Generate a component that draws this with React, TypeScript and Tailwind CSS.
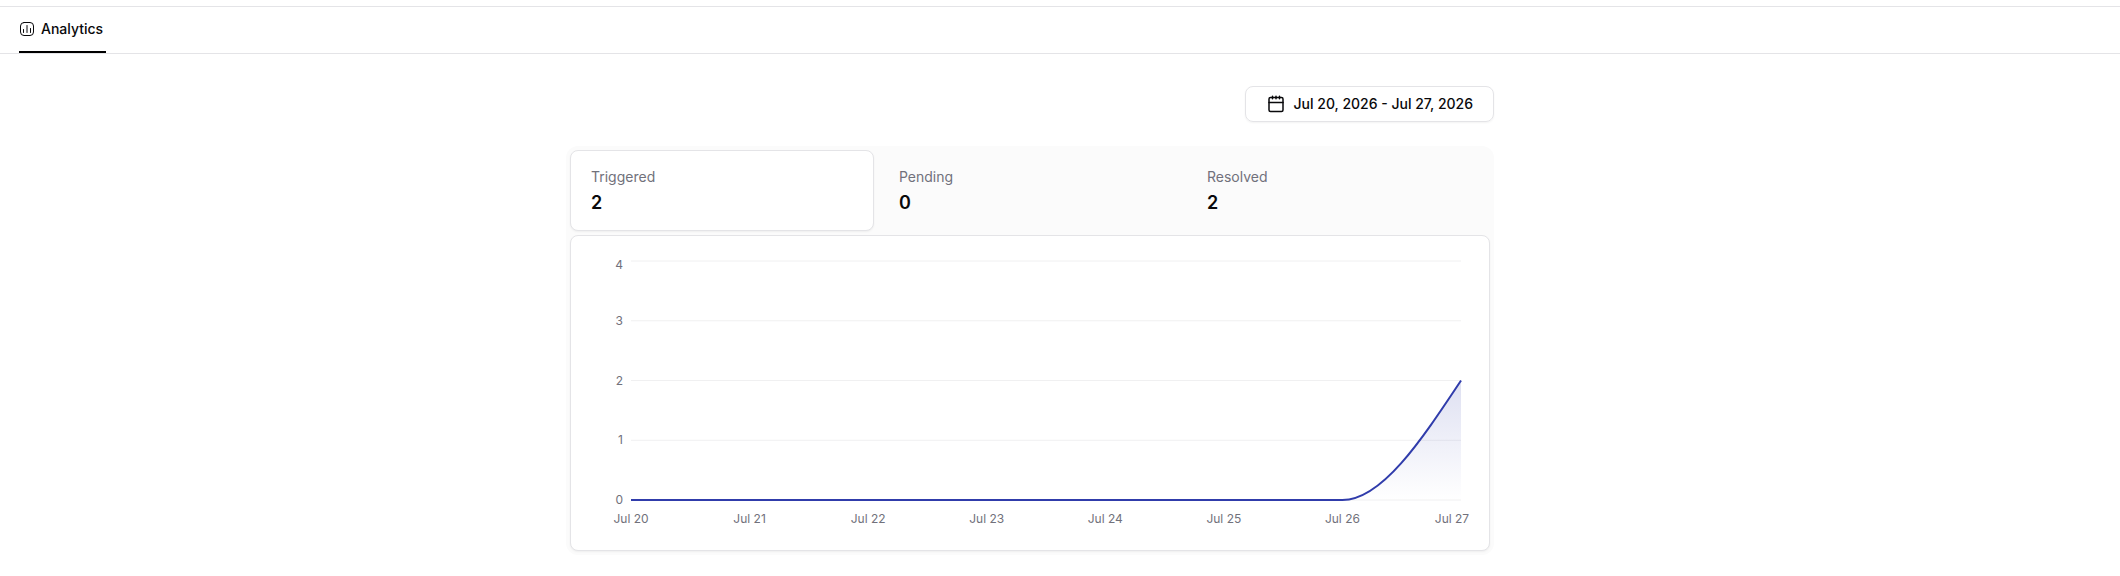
import { useId } from 'react'

const stats = [
  { label: 'Triggered', value: 2 },
  { label: 'Pending', value: 0 },
  { label: 'Resolved', value: 2 },
]

const yTicks = [4, 3, 2, 1, 0]
const days = ['Jul 20', 'Jul 21', 'Jul 22', 'Jul 23', 'Jul 24', 'Jul 25', 'Jul 26', 'Jul 27']

const plot = { left: 60, right: 890, top: 25, bottom: 264 }
const step = (plot.right - plot.left) / (days.length - 1)

function ChartIcon() {
  return (
    <svg viewBox="0 0 16 16" className="size-4" fill="none" stroke="currentColor" strokeLinecap="round">
      <rect x="1.5" y="1.5" width="13" height="13" rx="3.5" />
      <path d="M4.5 8.5v3M8 4.5v7M11.5 7.5v4" />
    </svg>
  )
}

function CalendarIcon() {
  return (
    <svg viewBox="0 0 20 20" className="size-5" fill="none" stroke="currentColor" strokeWidth="1.5" strokeLinecap="round" strokeLinejoin="round">
      <rect x="3" y="3.5" width="14" height="14" rx="1.5" />
      <path d="M3 8.5h14M6.5 2.25v2.5M10 2.25v2.5M13.5 2.25v2.5" />
    </svg>
  )
}

function AreaChart() {
  const id = useId()
  const x26 = plot.right - step
  const curve = `M${plot.left} ${plot.bottom}H${x26}C${x26 + step / 3} ${plot.bottom} ${plot.right - step / 3} ${plot.bottom - 60} ${plot.right} 144.5`

  return (
    <svg viewBox="0 0 918 314" className="block w-full" role="img" aria-label="Alerts per day">
      <defs>
        <linearGradient id={id} x1="0" y1="0" x2="0" y2="1">
          <stop offset="0" stopColor="#303cab" stopOpacity="0.16" />
          <stop offset="1" stopColor="#303cab" stopOpacity="0" />
        </linearGradient>
      </defs>
      {yTicks.map((t) => {
        const y = plot.bottom - (t * (plot.bottom - plot.top)) / 4
        return (
          <g key={t}>
            <path d={`M${plot.left} ${y}H${plot.right}`} stroke="#f0f0f1" />
            <text x="52" y={t === 4 ? 33 : y + 4} textAnchor="end" className="fill-zinc-500 text-xs">
              {t}
            </text>
          </g>
        )
      })}
      <path d={`${curve}V${plot.bottom}H${plot.left}Z`} fill={`url(#${id})`} />
      <path d={curve} fill="none" stroke="#303cab" strokeWidth="2" />
      {days.map((d, i) => (
        <text
          key={d}
          x={i === days.length - 1 ? 881 : plot.left + i * step}
          y="287"
          textAnchor="middle"
          className="fill-zinc-500 text-xs"
        >
          {d}
        </text>
      ))}
    </svg>
  )
}

export default function App() {
  return (
    <div className="bg-white pt-1.5 font-['Inter',sans-serif] text-zinc-950">
      <nav className="flex border-y border-zinc-200 px-[19px]">
        <a href="#analytics" className="flex h-[46px] items-center gap-1.5 border-b-2 border-black pr-[3px] text-sm font-medium">
          <ChartIcon />
          Analytics
        </a>
      </nav>

      <main className="mr-15 px-4 pt-8">
        <div className="mx-auto max-w-[928px]">
          <div className="flex justify-end">
            <button className="flex h-9 items-center gap-2 rounded-lg border border-zinc-200 px-5 text-sm font-medium shadow-xs">
              <CalendarIcon />
              Jul 20, 2026 - Jul 27, 2026
            </button>
          </div>

          <section className="mt-6 rounded-xl bg-[#fbfbfb] p-1">
            <div className="grid grid-cols-3 gap-1">
              {stats.map((s, i) => (
                <button
                  key={s.label}
                  className={
                    i === 0
                      ? 'rounded-lg border border-zinc-200 bg-white px-5 pt-4 pb-[15px] text-left shadow-xs'
                      : 'rounded-lg border border-transparent px-5 pt-4 pb-[15px] text-left'
                  }
                >
                  <div className="text-sm text-zinc-500">{s.label}</div>
                  <div className="mt-1 text-lg/6 font-semibold">{s.value}</div>
                </button>
              ))}
            </div>
            <div className="mt-1 rounded-lg border border-zinc-200 bg-white shadow-xs">
              <AreaChart />
            </div>
          </section>
        </div>
      </main>
    </div>
  )
}
